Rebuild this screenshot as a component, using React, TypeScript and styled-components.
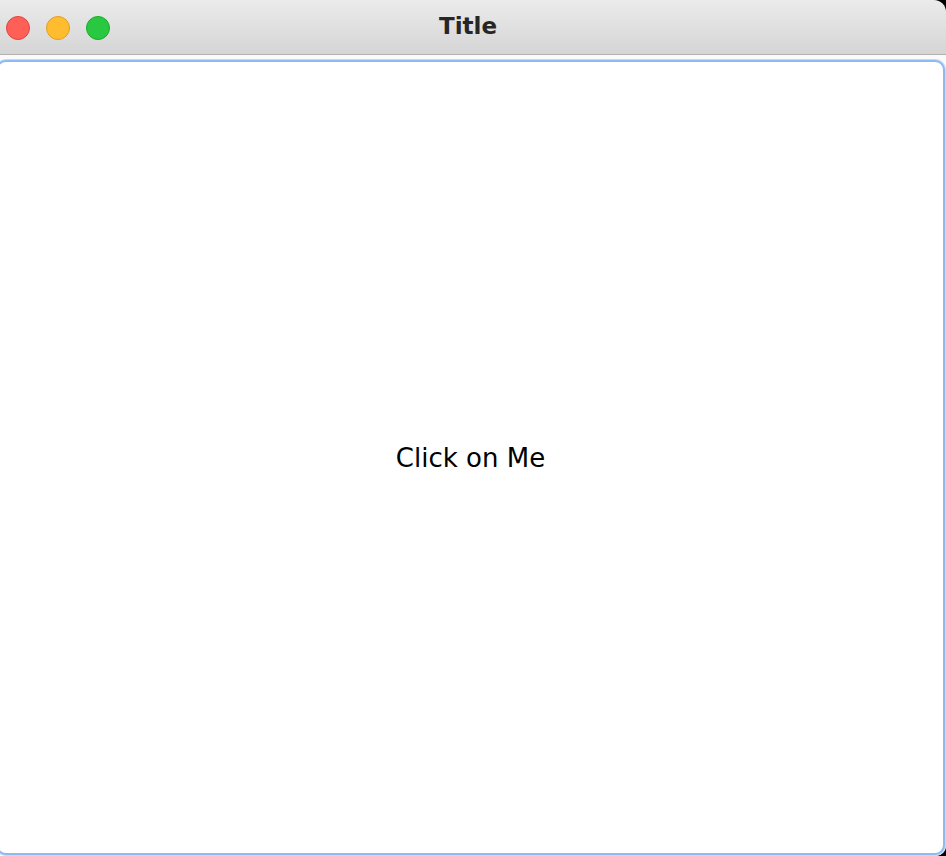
import styled, { createGlobalStyle } from "styled-components";

const GlobalStyle = createGlobalStyle`
    html, body {
        margin: 0;
        padding: 0;
        background: #ffffff;
    }
`;

function App() {
    return <Window>
        <GlobalStyle />
        <TitleBar>
            <Lights>
                <Light color="#fe5f57" edge="#e0443e" />
                <Light color="#febc2e" edge="#dea123" />
                <Light color="#28c840" edge="#1aab29" />
            </Lights>
            <Title>Title</Title>
        </TitleBar>
        <Content>
            <Panel>
                <Label>Click on Me</Label>
            </Panel>
        </Content>
    </Window>;
}

const Window = styled.div`
    display: flex;
    flex-direction: column;

    width: 946px;
    height: 856px;

    background: #000;
    overflow: hidden;
`;

const TitleBar = styled.div`
    position: relative;
    display: flex;
    align-items: center;
    justify-content: center;

    height: 54px;
    flex: none;

    border-bottom: 1px solid #b1b1b1;
    border-top-right-radius: 12px;
    background: linear-gradient(#ebebeb, #d5d5d5);
`;

const Lights = styled.div`
    position: absolute;
    left: 6px;
    top: 16px;

    display: flex;
    gap: 16px;
`;

const Light = styled.div<{ color: string; edge: string }>`
    width: 24px;
    height: 24px;

    box-sizing: border-box;
    border: 1px solid ${p => p.edge};
    border-radius: 50%;
    background: ${p => p.color};
`;

const Title = styled.div`
    margin: -2px 0 0 -10px;

    font-family: "DejaVu Sans", sans-serif;
    font-size: 23px;
    font-weight: bold;
    color: #262626;
`;

const Content = styled.div`
    display: flex;
    flex: 1;

    padding: 5px 1px 1px 0;

    background: #fafafa;
    border-bottom-right-radius: 10px;
`;

const Panel = styled.div`
    display: flex;
    flex: 1;
    align-items: center;
    justify-content: center;

    margin-left: -4px;

    border: 2px solid #8fbaf1;
    border-radius: 10px;
    box-shadow: 0 0 0 1px #c4dbf8;
    background: #fff;
`;

const Label = styled.div`
    font-family: "DejaVu Sans", sans-serif;
    font-size: 26px;
    color: #000;
`;

export default App;
